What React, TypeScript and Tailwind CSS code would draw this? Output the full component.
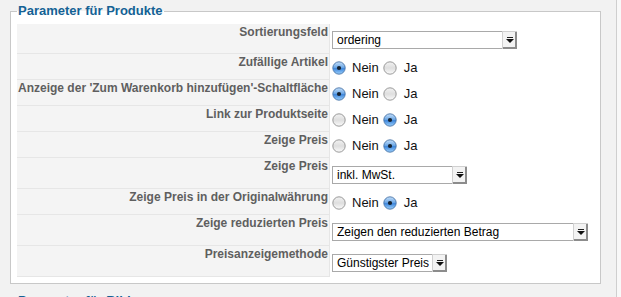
import type { ReactNode } from "react";

function Radio({ checked = false }: { checked?: boolean }) {
	if (checked) {
		return (
			<svg width="14" height="14" viewBox="0 0 14 14" className="shrink-0">
				<defs>
					<linearGradient id="rb-on" x1="0" y1="0" x2="0" y2="1">
						<stop offset="0" stopColor="#c6e0fa" />
						<stop offset="0.45" stopColor="#6fa9e6" />
						<stop offset="0.55" stopColor="#3f87dc" />
						<stop offset="1" stopColor="#9cd0fb" />
					</linearGradient>
				</defs>
				<circle cx="7" cy="7" r="6.2" fill="url(#rb-on)" stroke="#4c76a8" strokeWidth="0.9" />
				<circle cx="7" cy="7" r="2.1" fill="#16222f" />
			</svg>
		);
	}
	return (
		<svg width="14" height="14" viewBox="0 0 14 14" className="shrink-0">
			<defs>
				<linearGradient id="rb-off" x1="0" y1="0" x2="0" y2="1">
					<stop offset="0" stopColor="#f2f2f2" />
					<stop offset="0.5" stopColor="#dedede" />
					<stop offset="1" stopColor="#fbfbfb" />
				</linearGradient>
			</defs>
			<circle cx="7" cy="7" r="6.2" fill="url(#rb-off)" stroke="#8e8e8e" strokeWidth="0.9" />
		</svg>
	);
}

function YesNo({ yes }: { yes: boolean }) {
	return (
		<div className="flex items-center text-[13px] leading-[16px] text-[#111]">
			<Radio checked={!yes} />
			<span className="ml-[6px]">Nein</span>
			<span className="ml-[4px]">
				<Radio checked={yes} />
			</span>
			<span className="ml-[7px]">Ja</span>
		</div>
	);
}

function Select({ value, className }: { value: string; className: string }) {
	return (
		<div
			className={`flex h-[18px] items-stretch border border-[#a9a9a9] bg-white ${className}`}
		>
			<span className="flex-1 whitespace-nowrap pl-[4px] text-[12px] leading-[16px] text-black">
				{value}
			</span>
			<span className="-mb-px -mr-px -mt-px flex w-[15px] items-center justify-center border-l border-t border-[#d0d0d0] bg-[#f3f3f3] pb-[1px] shadow-[inset_-2px_-2px_0_#8c8c8c]">
				<svg width="8" height="6" viewBox="0 0 8 6">
					<rect x="1" y="0" width="6" height="1" fill="#222" />
					<polygon points="0,2 8,2 4,6" fill="#111" />
				</svg>
			</span>
		</div>
	);
}

type Row = { label: string; h: string; control: ReactNode };

const rows: Row[] = [
	{
		label: "Sortierungsfeld",
		h: "h-[30px]",
		control: <Select value="ordering" className="w-[185px]" />,
	},
	{ label: "Zufällige Artikel", h: "h-[26px]", control: <YesNo yes={false} /> },
	{
		label: "Anzeige der 'Zum Warenkorb hinzufügen'-Schaltfläche",
		h: "h-[26px]",
		control: <YesNo yes={false} />,
	},
	{ label: "Link zur Produktseite", h: "h-[26px]", control: <YesNo yes /> },
	{ label: "Zeige Preis", h: "h-[26px]", control: <YesNo yes /> },
	{
		label: "Zeige Preis",
		h: "h-[31px]",
		control: <Select value="inkl. MwSt." className="w-[135px]" />,
	},
	{
		label: "Zeige Preis in der Originalwährung",
		h: "h-[26px]",
		control: <YesNo yes />,
	},
	{
		label: "Zeige reduzierten Preis",
		h: "h-[31px]",
		control: <Select value="Zeigen den reduzierten Betrag" className="w-[256px]" />,
	},
	{
		label: "Preisanzeigemethode",
		h: "h-[31px]",
		control: <Select value="Günstigster Preis" className="w-[115px]" />,
	},
];

export default function App() {
	return (
		<div className="h-[297px] w-[621px] overflow-hidden bg-[#f8f8f8] font-['Liberation_Sans',Arial,sans-serif]">
			<div className="h-full w-[617px] border-r border-[#cfcfcf] bg-[#f2f2f2] pt-[3px]">
				<fieldset className="ml-[10px] w-[591px] border border-[#c8c8c8] bg-white pb-[6px] pl-[6px] pr-[6px] pt-[4px]">
					<legend className="px-[1px] pb-[2px] text-[13px] font-bold leading-[15px] text-[#146295]">
						Parameter für Produkte
					</legend>
					<div className="flex flex-col">
						{rows.map((row, i) => (
							<div key={i} className={`flex ${row.h}`}>
								<div className="w-[313px] shrink-0 whitespace-nowrap border-b border-r border-[#e6e6e6] bg-[#f4f4f4] pr-[1px] pt-[1px] text-right text-[12px] font-bold leading-[14px] text-[#5f5f5f]">
									{row.label}
								</div>
								<div className="flex items-center pl-[2px] pt-[2px]">
									{row.control}
								</div>
							</div>
						))}
					</div>
				</fieldset>
				<fieldset className="ml-[10px] mt-[9px] w-[591px] border border-[#c8c8c8] bg-white pl-[6px] pr-[6px]">
					<legend className="px-[1px] pb-[2px] text-[13px] font-bold leading-[15px] text-[#146295]">
						Parameter für Bilder
					</legend>
					<div className="h-[40px]" />
				</fieldset>
			</div>
		</div>
	);
}
